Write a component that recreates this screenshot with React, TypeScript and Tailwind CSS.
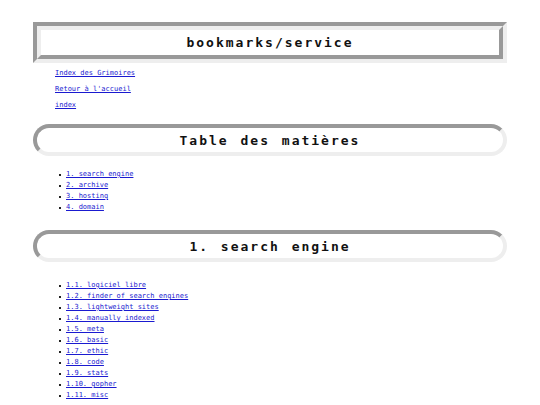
import React from 'react';

const mono = { fontFamily: '"DejaVu Sans Mono", "Liberation Mono", monospace' };

const navLinks = ['Index des Grimoires', "Retour à l'accueil", 'index'];

const toc = ['1. search engine', '2. archive', '3. hosting', '4. domain'];

const searchEngine = [
  '1.1. logiciel libre',
  '1.2. finder of search engines',
  '1.3. lightweight sites',
  '1.4. manually indexed',
  '1.5. meta',
  '1.6. basic',
  '1.7. ethic',
  '1.8. code',
  '1.9. stats',
  '1.10. gopher',
  '1.11. misc',
];

function SectionTitle({ children }: { children: React.ReactNode }) {
  return (
    <h2 className="mx-[33px] h-[32px] rounded-[16px] border-4 border-t-[#999] border-l-[#999] border-b-[#eee] border-r-[#eee] flex items-center justify-center">
      <span className="pt-[1px] text-[13px] font-bold text-[#111] tracking-[2px] [word-spacing:2px] whitespace-pre">{children}</span>
    </h2>
  );
}

function LinkList({ items }: { items: string[] }) {
  return (
    <ul className="text-[7px] leading-[11px]">
      {items.map((item) => (
        <li key={item} className="flex items-center h-[11px] pl-[59px]">
          <span className="w-[2px] h-[2px] bg-[#222] mr-[5px] mt-[1px]" />
          <a href="#" className="text-[#1a1ad0] underline">{item}</a>
        </li>
      ))}
    </ul>
  );
}

export default function App() {
  return (
    <div className="bg-white min-h-[405px] pt-[22px]" style={mono}>
      <h1 className="mx-[33px] h-[41px] border-4 border-t-[#999] border-l-[#999] border-b-[#eee] border-r-[#eee]">
        <div className="h-full border-4 border-t-[#eee] border-l-[#eee] border-b-[#999] border-r-[#999] flex items-center justify-center">
          <span className="text-[13px] font-bold text-[#111] tracking-[2px]">bookmarks/service</span>
        </div>
      </h1>

      <nav className="mt-[2px] pl-[55px] flex flex-col">
        {navLinks.map((label) => (
          <a key={label} href="#" className="h-[16px] leading-[16px] text-[7px] text-[#1a1ad0] underline">
            {label}
          </a>
        ))}
      </nav>

      <div className="mt-[11px]">
        <SectionTitle>Table des matières</SectionTitle>
      </div>
      <div className="mt-[13px]">
        <LinkList items={toc} />
      </div>

      <div className="mt-[17px]">
        <SectionTitle>1. search engine</SectionTitle>
      </div>
      <div className="mt-[18px]">
        <LinkList items={searchEngine} />
      </div>
    </div>
  );
}
